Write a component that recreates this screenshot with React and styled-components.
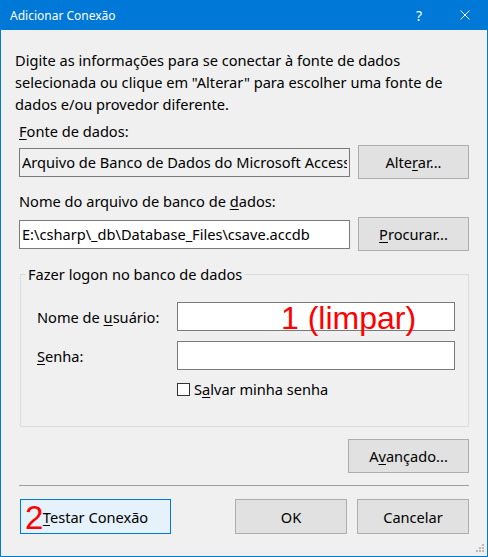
import React from 'react';
import styled, { createGlobalStyle } from 'styled-components';

const GlobalStyle = createGlobalStyle`
  html, body {
    margin: 0;
    padding: 0;
    background: #f0f0f0;
  }
  * {
    box-sizing: border-box;
  }
`

const Window = styled.div`
  position: relative;
  width: 488px;
  height: 557px;
  display: flex;
  flex-direction: column;
  background: #f0f0f0;
  border: 1px solid #0078d7;
  border-top: none;
  font-family: 'Noto Sans', 'Liberation Sans', sans-serif;
  font-size: 14.6px;
  color: #000;
  overflow: hidden;
`

const TitleBar = styled.div`
  height: 30px;
  margin: 0 -1px;
  display: flex;
  align-items: center;
  background: #0078d7;
  color: #fff;
  font-size: 12px;
  padding-left: 10px;
`

const TitleText = styled.span`
  flex: 1;
`

const CaptionButton = styled.div`
  width: 46px;
  height: 30px;
  display: flex;
  align-items: center;
  justify-content: center;
  font-size: 14px;
`

const Content = styled.div`
  flex: 1;
  display: flex;
  flex-direction: column;
  padding: 0 18px;
`

const Description = styled.p`
  margin: 19px 0 0 -4px;
  line-height: 22px;
  white-space: nowrap;
`

const Label = styled.div`
  line-height: 20px;
  margin-top: ${p => p.$top || 0}px;
  white-space: nowrap;
`

const Key = styled.span`
  text-decoration: underline;
  text-underline-offset: 2px;
`

const FieldRow = styled.div`
  display: grid;
  grid-template-columns: 331px 111px;
  column-gap: 8px;
  align-items: center;
  margin-top: ${p => p.$top || 0}px;
`

const TextBox = styled.input`
  height: 29px;
  width: 100%;
  border: 1px solid #7a7a7a;
  background: ${p => (p.readOnly ? '#f0f0f0' : '#fff')};
  font: inherit;
  color: #000;
  padding: 0 2px;
  margin: 0;
  outline: none;
`

const Button = styled.button`
  position: relative;
  height: ${p => p.$h || 34}px;
  width: ${p => p.$w || 111}px;
  border: 1px solid ${p => (p.$focused ? '#0078d7' : '#adadad')};
  background: ${p => (p.$focused ? '#e5f1fb' : '#e1e1e1')};
  font: inherit;
  color: #000;
  padding: 0;
  margin: 0;
`

const Group = styled.fieldset`
  margin: 13px 0 0 1px;
  padding: 18px 13px 27px 16px;
  border: 1px solid #dcdcdc;
  min-width: 0;
`

const Legend = styled.legend`
  margin-left: -11px;
  padding: 0 2px;
  line-height: 20px;
`

const LogonGrid = styled.div`
  display: grid;
  grid-template-columns: 1fr 278px;
  row-gap: 10px;
  align-items: center;
`

const InputWrap = styled.div`
  position: relative;
`

const Note = styled.span`
  position: absolute;
  font-family: 'Liberation Sans', Arial, sans-serif;
  color: #ff0000;
  line-height: 1;
  pointer-events: none;
  white-space: nowrap;
`

const CheckRow = styled.label`
  grid-column: 2;
  display: flex;
  align-items: center;
  gap: 4px;
  margin-top: -1px;
  line-height: 20px;
`

const CheckBox = styled.span`
  width: 13px;
  height: 13px;
  border: 1px solid #333;
  background: #fff;
`

const RightRow = styled.div`
  display: flex;
  justify-content: flex-end;
  margin-top: 12px;
`

const Separator = styled.div`
  height: 1px;
  background: #a0a0a0;
  margin: 12px 0 0 0;
`

const BottomRow = styled.div`
  display: flex;
  margin-top: 13px;
  gap: 10px;
  padding-left: 1px;
`

const Spacer = styled.div`
  flex: 1;
`

const Grip = styled.svg`
  position: absolute;
  right: 3px;
  bottom: 4px;
`

const CloseIcon = () => (
  <svg width="10" height="10" viewBox="0 0 10 10">
    <path d="M0.5 0.5 L9.5 9.5 M9.5 0.5 L0.5 9.5" stroke="#fff" strokeWidth="1" />
  </svg>
)

const GripIcon = () => (
  <Grip width="8" height="8" viewBox="0 0 8 8">
    {[[6, 0], [3, 3], [6, 3], [0, 6], [3, 6], [6, 6]].map(([x, y]) => (
      <rect key={`${x}-${y}`} x={x} y={y} width="2" height="2" fill="#b8b8b8" />
    ))}
  </Grip>
)

export default function App() {
  return (
    <>
      <GlobalStyle />
      <Window>
        <TitleBar>
          <TitleText>Adicionar Conexão</TitleText>
          <CaptionButton>?</CaptionButton>
          <CaptionButton><CloseIcon /></CaptionButton>
        </TitleBar>
        <Content>
          <Description>
            Digite as informações para se conectar à fonte de dados<br />
            selecionada ou clique em "Alterar" para escolher uma fonte de<br />
            dados e/ou provedor diferente.
          </Description>

          <Label $top={6}><Key>F</Key>onte de dados:</Label>
          <FieldRow $top={4}>
            <TextBox readOnly value="Arquivo de Banco de Dados do Microsoft Access" />
            <Button>Alte<Key>r</Key>ar...</Button>
          </FieldRow>

          <Label $top={12}>Nome do arquivo de banco de <Key>d</Key>ados:</Label>
          <FieldRow $top={6}>
            <TextBox defaultValue="E:\csharp\_db\Database_Files\csave.accdb" />
            <Button>
              <Key>P</Key>rocurar...
            </Button>
          </FieldRow>

          <Group>
            <Legend>Fazer logon no banco de dados</Legend>
            <LogonGrid>
              <span>Nome de <Key>u</Key>suário:</span>
              <InputWrap>
                <TextBox defaultValue="" />
                <Note style={{ left: 104, top: 0, fontSize: 32 }}>1 (limpar)</Note>
              </InputWrap>
              <span><Key>S</Key>enha:</span>
              <TextBox type="password" defaultValue="" />
              <CheckRow>
                <CheckBox />
                <span>S<Key>a</Key>lvar minha senha</span>
              </CheckRow>
            </LogonGrid>
          </Group>

          <RightRow>
            <Button $w={121}>A<Key>v</Key>ançado...</Button>
          </RightRow>

          <Separator />

          <BottomRow>
            <Button $w={151} $h={35} $focused>
              <Note style={{ left: 4, top: 1, fontSize: 33 }}>2</Note>
              <Key>T</Key>estar Conexão
            </Button>
            <Spacer />
            <Button $w={112} $h={35}>OK</Button>
            <Button $w={112} $h={35}>Cancelar</Button>
          </BottomRow>
        </Content>
        <GripIcon />
      </Window>
    </>
  )
}
